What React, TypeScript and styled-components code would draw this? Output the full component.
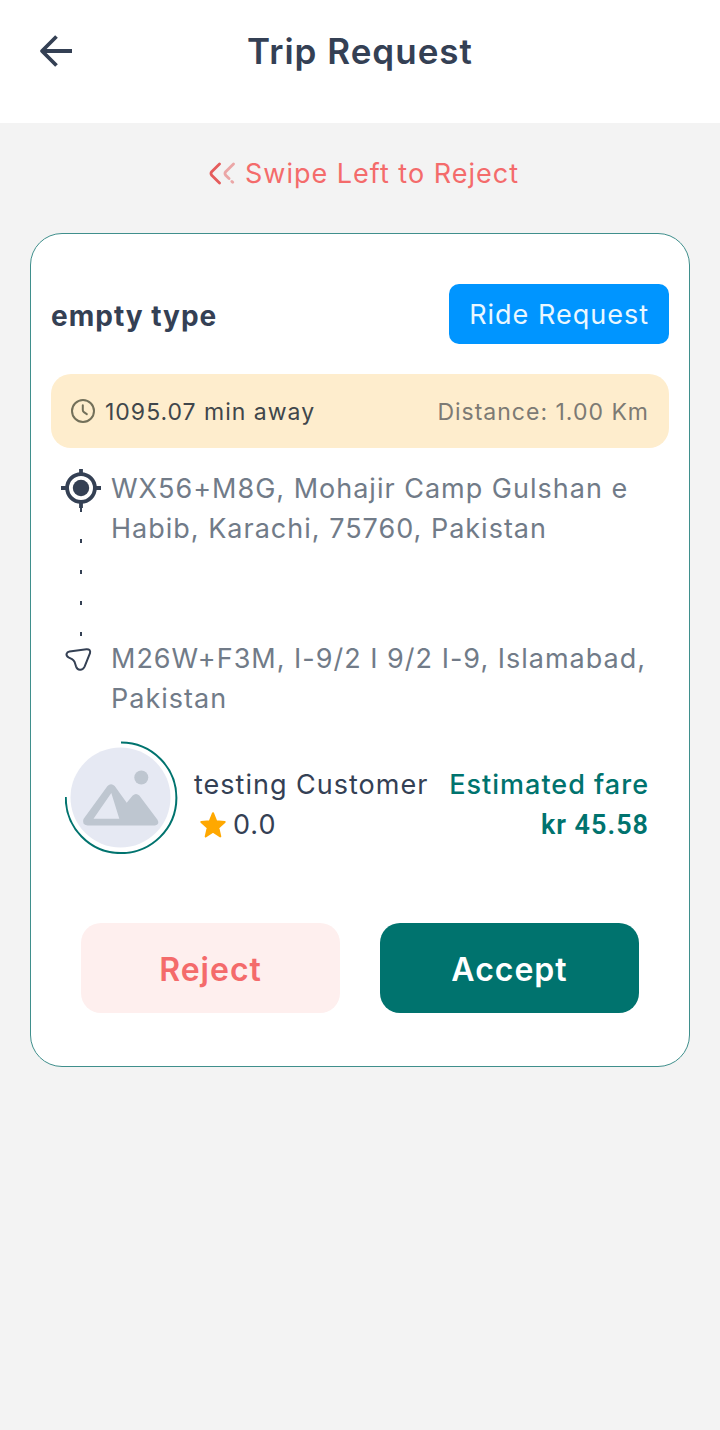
import React from "react";
import styled, { createGlobalStyle } from "styled-components";

const color = {
  ink: "#344054",
  muted: "#717b88",
  teal: "#00736e",
  coral: "#f46b6b",
  page: "#f3f3f3",
};

const GlobalStyle = createGlobalStyle`
  *, *::before, *::after { box-sizing: border-box; }
  body {
    margin: 0;
    background: ${color.page};
    color: ${color.ink};
    font-family: Inter, "Liberation Sans", sans-serif;
    font-size: 27px;
    line-height: 40px;
    letter-spacing: 1px;
  }
  button { font: inherit; letter-spacing: inherit; border: 0; cursor: pointer; }
  h1, h2, p, ol { margin: 0; padding: 0; }
  svg { display: block; flex: none; }
`;

const Page = styled.div`
  min-height: 100vh;
`;

const Header = styled.header`
  display: grid;
  grid-template-columns: 60px 1fr 60px;
  align-items: center;
  padding: 20px 30px 41px;
  background: #fff;
`;

const BackButton = styled.button`
  display: flex;
  padding: 8px;
  background: none;
  color: ${color.ink};
`;

const Title = styled.h1`
  font-size: 35px;
  font-weight: 600;
  line-height: 62px;
  text-align: center;
`;

const Main = styled.main`
  padding: 31px 30px 30px;
`;

const SwipeHint = styled.p`
  display: flex;
  justify-content: center;
  align-items: center;
  gap: 8px;
  margin-bottom: 39px;
  padding-left: 8px;
  color: ${color.coral};
`;

const Card = styled.section`
  padding: 50px 20px 53px;
  border: 1px solid #3f8f8c;
  border-radius: 32px;
  background: #fff;
`;

const CardHeader = styled.div`
  display: flex;
  justify-content: space-between;
  align-items: center;
  margin-bottom: 30px;
`;

const RideType = styled.h2`
  padding-top: 4px;
  font-size: 28px;
  font-weight: 700;
`;

const Badge = styled.span`
  padding: 11px 20px 9px;
  border-radius: 10px;
  background: #0095ff;
  color: #e9f7ff;
`;

const InfoBar = styled.div`
  display: flex;
  align-items: center;
  justify-content: space-between;
  margin-bottom: 21px;
  padding: 18px 20px 16px;
  border-radius: 20px;
  background: #feedcd;
  font-size: 23px;
`;

const Away = styled.span`
  display: flex;
  align-items: center;
  gap: 9px;
  color: #40464b;
`;

const Distance = styled.span`
  color: #7c7a74;
`;

const Route = styled.ol`
  list-style: none;
  margin-bottom: 22px;
`;

const Stop = styled.li<{ $connected?: boolean }>`
  display: flex;
  gap: 10px;
  min-height: ${(p) => (p.$connected ? "170px" : "80px")};
  padding-left: 10px;
  color: ${color.muted};
`;

const Marker = styled.div`
  display: flex;
  flex-direction: column;
  align-items: center;
  width: 40px;
  flex: none;
`;

const DashedLine = styled.div`
  flex: 1;
  width: 2px;
  background: repeating-linear-gradient(${color.ink} 0 4px, transparent 4px 31px);
`;

const Customer = styled.div`
  display: flex;
  align-items: flex-start;
  gap: 16px;
  padding: 0 20px 0 14px;
  margin-bottom: 69px;
`;

const Details = styled.div`
  flex: 1;
  display: flex;
  justify-content: space-between;
  padding-top: 24px;
  white-space: nowrap;
`;

const Rating = styled.p`
  display: flex;
  align-items: center;
  gap: 6px;
  padding-left: 5px;
`;

const Fare = styled.div`
  color: ${color.teal};
  font-weight: 500;
  text-align: right;
`;

const Amount = styled.p`
  font-family: Roboto, "Liberation Sans", sans-serif;
  font-weight: 600;
`;

const Actions = styled.div`
  display: grid;
  grid-template-columns: 1fr 1fr;
  gap: 40px;
  padding: 0 30px;
`;

const ActionButton = styled.button<{ $primary?: boolean }>`
  && {
    font-size: 32px;
    font-weight: 600;
  }
  padding: 27px 0 23px;
  border-radius: 20px;
  background: ${(p) => (p.$primary ? color.teal : "#feefee")};
  color: ${(p) => (p.$primary ? "#fff" : color.coral)};
`;

const BackIcon = () => (
  <svg width="36" height="36" viewBox="0 0 36 36" fill="none" stroke="currentColor" strokeWidth="3.800" aria-hidden="true">
    <path d="M34 18H6M18.500 3.500L4 18l14.500 14.500" strokeLinejoin="round" />
  </svg>
);

const ChevronsIcon = () => (
  <svg width="28" height="24" viewBox="0 0 28 24" fill="none" stroke="#e55c5c" strokeWidth="2.800" strokeLinecap="round" strokeLinejoin="round" aria-hidden="true">
    <path d="M10.500 2L2.700 9.700Q1.300 11.500 2.700 13.300L10.500 21" />
    <g opacity="0.5">
      <path d="M24.500 2L16.700 9.700Q15.300 11.500 16.700 13.300L20 16.500" />
      <path d="M22.900 19.500L23.700 20.300" />
    </g>
  </svg>
);

const ClockIcon = () => (
  <svg width="25" height="26" viewBox="0 0 25 26" fill="none" stroke="#73705a" strokeWidth="2" strokeLinecap="round" aria-hidden="true">
    <circle cx="12" cy="12" r="11" />
    <path d="M11.800 6.300V11.100Q11.800 12.500 12.900 13.200L15.800 15.100" />
  </svg>
);

const TargetIcon = () => (
  <svg width="40" height="39" viewBox="0 0 40 39" fill="none" stroke={color.ink} strokeWidth="3.800" aria-hidden="true">
    <circle cx="20" cy="19" r="13.900" />
    <circle cx="20" cy="19" r="8.200" fill={color.ink} stroke="none" />
    <path d="M20 0v5M20 33v6M0 19h5M35 19h5" />
  </svg>
);

const DestinationIcon = () => (
  <svg width="40" height="40" viewBox="0 0 40 40" fill="none" stroke={color.ink} strokeWidth="2" strokeLinejoin="round" aria-hidden="true">
    <path d="M8.500 12.400L25.500 10.200Q30 10 29 14.200L23.600 27.600Q22 31 18.800 30.700Q16.200 30.700 15 27.300L13.600 23Q12.700 21.200 11 20.100L7.500 18.400Q5 16.800 5.600 14.700Q6.200 12.800 8.500 12.400Z" />
  </svg>
);

const Avatar = () => (
  <svg width="113" height="113" viewBox="0 0 113 113" role="img" aria-label="Customer photo">
    <circle cx="55.500" cy="56.500" r="50" fill="#e6e9f3" />
    <path d="M56 1.500A55.300 55.300 0 1 1 .8 56" fill="none" stroke={color.teal} strokeWidth="2" />
    <circle cx="76.300" cy="36.500" r="7" fill="#bec6d0" />
    <path
      fill="#bec6d0"
      fillRule="evenodd"
      d="M42.500 45Q46 41.500 49.700 45L61.700 61.800L67.700 54.500Q71 51.500 74.300 54.500L92.500 78.700Q95 83.500 90 84.500H22.500Q16.500 83.500 18.500 78ZM46.300 52L28.500 77.700H54.300Z"
    />
  </svg>
);

const StarIcon = () => (
  <svg width="28" height="28" viewBox="0 0 28 28" fill="#ffa800" stroke="#ffa800" strokeWidth="2" strokeLinejoin="round" aria-hidden="true">
    <path d="M14 2.200L17.300 10.300L25.700 11L19.300 16.700L21.300 25.400L14 20.700L6.700 25.400L8.700 16.700L2.300 11L10.700 10.300Z" />
  </svg>
);

export default function App() {
  return (
    <Page>
      <GlobalStyle />
      <Header>
        <BackButton type="button" aria-label="Back">
          <BackIcon />
        </BackButton>
        <Title>Trip Request</Title>
      </Header>
      <Main>
        <SwipeHint>
          <ChevronsIcon />
          Swipe Left to Reject
        </SwipeHint>
        <Card>
          <CardHeader>
            <RideType>empty type</RideType>
            <Badge>Ride Request</Badge>
          </CardHeader>
          <InfoBar>
            <Away>
              <ClockIcon />
              1095.07 min away
            </Away>
            <Distance>Distance: 1.00 Km</Distance>
          </InfoBar>
          <Route>
            <Stop $connected>
              <Marker>
                <TargetIcon />
                <DashedLine />
              </Marker>
              <p>WX56+M8G, Mohajir Camp Gulshan e Habib, Karachi, 75760, Pakistan</p>
            </Stop>
            <Stop>
              <Marker>
                <DestinationIcon />
              </Marker>
              <p>M26W+F3M, I-9/2 I 9/2 I-9, Islamabad, Pakistan</p>
            </Stop>
          </Route>
          <Customer>
            <Avatar />
            <Details>
              <div>
                <p>testing Customer</p>
                <Rating>
                  <StarIcon />
                  0.0
                </Rating>
              </div>
              <Fare>
                <p>Estimated fare</p>
                <Amount>kr 45.58</Amount>
              </Fare>
            </Details>
          </Customer>
          <Actions>
            <ActionButton type="button">Reject</ActionButton>
            <ActionButton type="button" $primary>
              Accept
            </ActionButton>
          </Actions>
        </Card>
      </Main>
    </Page>
  );
}
